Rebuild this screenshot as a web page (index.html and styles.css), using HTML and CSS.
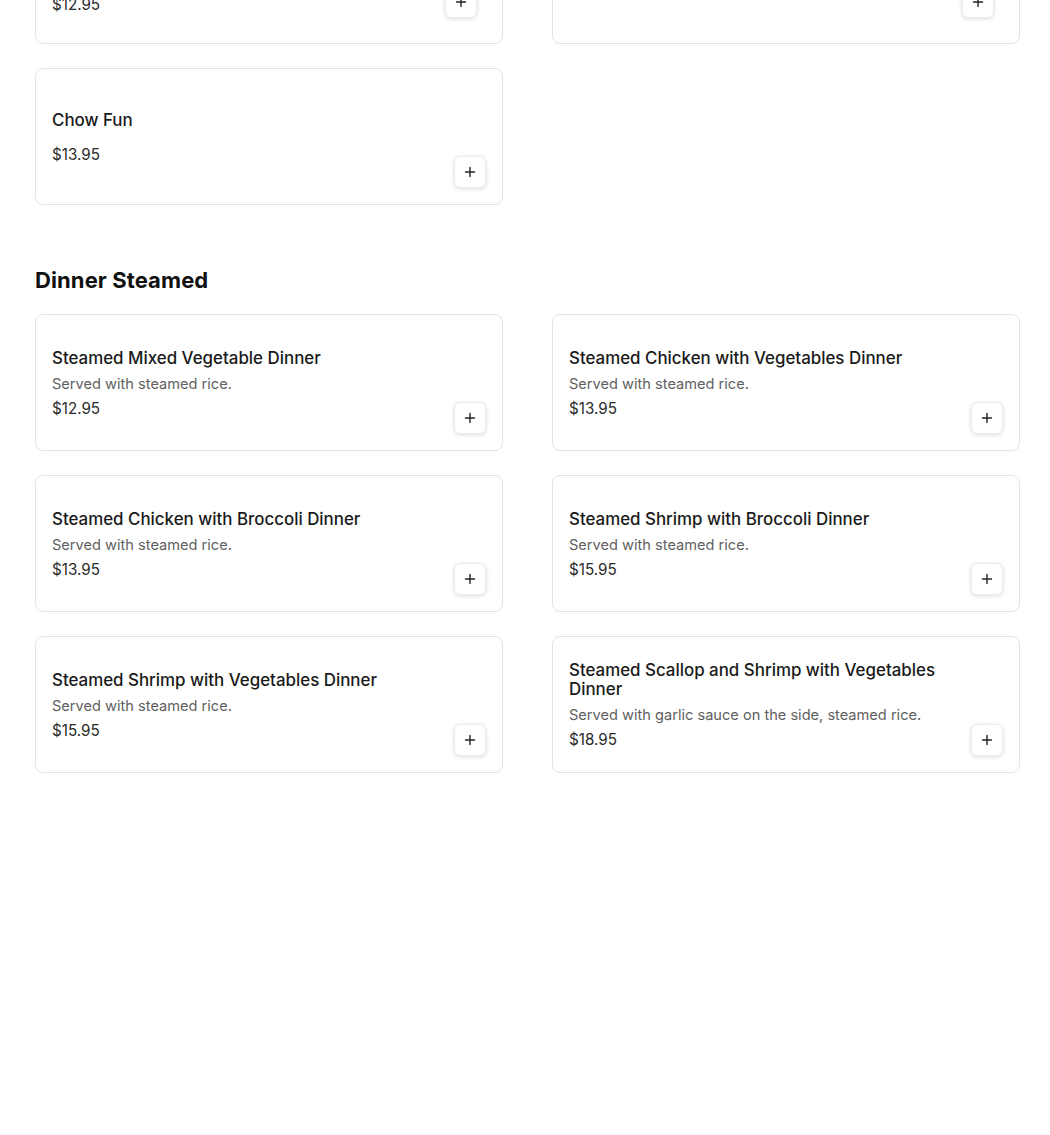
FILE: index.html
```html
<!DOCTYPE html>
<html lang="en">
<head>
<meta charset="utf-8">
<title>Menu</title>
<link rel="stylesheet" href="styles.css">
</head>
<body>
<main class="menu">
  <section class="category category--first">
    <div class="grid">
      <article class="card card--top card--top-left">
        <div class="card-body">
          <h3 class="item-name">Chicken Chow Mein</h3>
          <p class="item-price">$12.95</p>
        </div>
        <button class="add add--top" aria-label="Add"><svg viewBox="0 0 12 12" width="12" height="12"><path d="M6 1.5v9M1.5 6h9" stroke="#222" stroke-width="1.4" stroke-linecap="round"/></svg></button>
      </article>
      <article class="card card--top card--top-right">
        <div class="card-body">
          <h3 class="item-name">Shrimp Lo Mein</h3>
          <p class="item-price">$13.95</p>
        </div>
        <button class="add add--top" aria-label="Add"><svg viewBox="0 0 12 12" width="12" height="12"><path d="M6 1.5v9M1.5 6h9" stroke="#222" stroke-width="1.4" stroke-linecap="round"/></svg></button>
      </article>
      <article class="card">
        <div class="card-body">
          <h3 class="item-name">Chow Fun</h3>
          <p class="item-price item-price--nodesc">$13.95</p>
        </div>
        <button class="add" aria-label="Add"><svg viewBox="0 0 12 12" width="12" height="12"><path d="M6 1.5v9M1.5 6h9" stroke="#222" stroke-width="1.4" stroke-linecap="round"/></svg></button>
      </article>
    </div>
  </section>

  <section class="category">
    <h2 class="category-title">Dinner Steamed</h2>
    <div class="grid">
      <article class="card">
        <div class="card-body">
          <h3 class="item-name">Steamed Mixed Vegetable Dinner</h3>
          <p class="item-desc">Served with steamed rice.</p>
          <p class="item-price">$12.95</p>
        </div>
        <button class="add" aria-label="Add"><svg viewBox="0 0 12 12" width="12" height="12"><path d="M6 1.5v9M1.5 6h9" stroke="#222" stroke-width="1.4" stroke-linecap="round"/></svg></button>
      </article>
      <article class="card">
        <div class="card-body">
          <h3 class="item-name">Steamed Chicken with Vegetables Dinner</h3>
          <p class="item-desc">Served with steamed rice.</p>
          <p class="item-price">$13.95</p>
        </div>
        <button class="add" aria-label="Add"><svg viewBox="0 0 12 12" width="12" height="12"><path d="M6 1.5v9M1.5 6h9" stroke="#222" stroke-width="1.4" stroke-linecap="round"/></svg></button>
      </article>
      <article class="card">
        <div class="card-body">
          <h3 class="item-name">Steamed Chicken with Broccoli Dinner</h3>
          <p class="item-desc">Served with steamed rice.</p>
          <p class="item-price">$13.95</p>
        </div>
        <button class="add" aria-label="Add"><svg viewBox="0 0 12 12" width="12" height="12"><path d="M6 1.5v9M1.5 6h9" stroke="#222" stroke-width="1.4" stroke-linecap="round"/></svg></button>
      </article>
      <article class="card">
        <div class="card-body">
          <h3 class="item-name">Steamed Shrimp with Broccoli Dinner</h3>
          <p class="item-desc">Served with steamed rice.</p>
          <p class="item-price">$15.95</p>
        </div>
        <button class="add" aria-label="Add"><svg viewBox="0 0 12 12" width="12" height="12"><path d="M6 1.5v9M1.5 6h9" stroke="#222" stroke-width="1.4" stroke-linecap="round"/></svg></button>
      </article>
      <article class="card">
        <div class="card-body">
          <h3 class="item-name">Steamed Shrimp with Vegetables Dinner</h3>
          <p class="item-desc">Served with steamed rice.</p>
          <p class="item-price">$15.95</p>
        </div>
        <button class="add" aria-label="Add"><svg viewBox="0 0 12 12" width="12" height="12"><path d="M6 1.5v9M1.5 6h9" stroke="#222" stroke-width="1.4" stroke-linecap="round"/></svg></button>
      </article>
      <article class="card">
        <div class="card-body">
          <h3 class="item-name">Steamed Scallop and Shrimp with Vegetables Dinner</h3>
          <p class="item-desc">Served with garlic sauce on the side, steamed rice.</p>
          <p class="item-price">$18.95</p>
        </div>
        <button class="add" aria-label="Add"><svg viewBox="0 0 12 12" width="12" height="12"><path d="M6 1.5v9M1.5 6h9" stroke="#222" stroke-width="1.4" stroke-linecap="round"/></svg></button>
      </article>
    </div>
  </section>
</main>
</body>
</html>
```

FILE: styles.css
```css
* { box-sizing: border-box; }

html, body {
  margin: 0;
  padding: 0;
  background: #fff;
}

body {
  font-family: Inter, "Noto Sans", "Liberation Sans", sans-serif;
  color: #1a1a1a;
  overflow: hidden;
  height: 1135px;
}

.menu {
  padding: 0 30px 0 35px;
  margin-top: -93px;
}

.category + .category {
  margin-top: 61px;
}

.category-title {
  margin: 0 0 20px;
  font-size: 22px;
  line-height: 28px;
  font-weight: 700;
  color: #111;
  letter-spacing: 0.1px;
}

.grid {
  display: grid;
  grid-template-columns: 1fr 1fr;
  column-gap: 49px;
  row-gap: 24px;
}

.card {
  position: relative;
  height: 137px;
  border: 1px solid #e3e3e3;
  border-radius: 8px;
  background: #fff;
  display: flex;
  align-items: center;
  padding: 2px 64px 0 16px;
}

.card--top {
  align-items: flex-end;
}

.card--top-left { padding-bottom: 28px; }
.card--top-right { padding-bottom: 40px; }

.card-body {
  width: 100%;
}

.item-name {
  margin: 0;
  font-size: 16.9px;
  line-height: 19px;
  font-weight: 500;
  color: #1a1a1a;
}

.item-desc {
  margin: 6px 0 0;
  font-size: 14.6px;
  line-height: 20px;
  color: #5f5f5f;
  white-space: nowrap;
}

.item-price {
  margin: 5px 0 0;
  font-size: 15.2px;
  line-height: 20px;
  color: #2a2a2a;
}

.item-price--nodesc {
  margin-top: 15px;
}

.add {
  position: absolute;
  right: 16px;
  bottom: 16px;
  width: 32px;
  height: 32px;
  border: 1px solid #ececec;
  border-radius: 6px;
  background: #fff;
  box-shadow: 0 1px 4px rgba(0, 0, 0, 0.14);
  display: flex;
  align-items: center;
  justify-content: center;
  padding: 0;
  cursor: pointer;
}

.add--top {
  right: 25px;
  bottom: 25px;
}
```
